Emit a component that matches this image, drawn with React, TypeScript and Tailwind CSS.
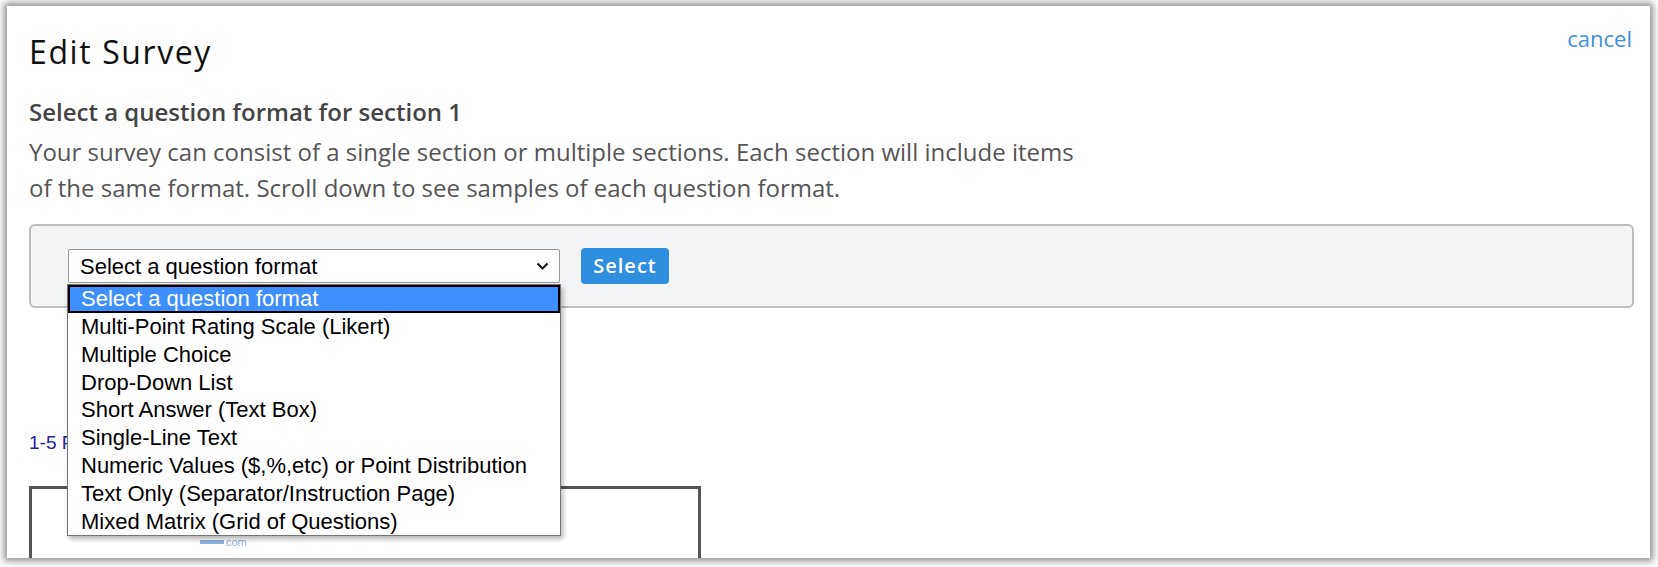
import React from "react";

const formats = [
  "Select a question format",
  "Multi-Point Rating Scale (Likert)",
  "Multiple Choice",
  "Drop-Down List",
  "Short Answer (Text Box)",
  "Single-Line Text",
  "Numeric Values ($,%,etc) or Point Distribution",
  "Text Only (Separator/Instruction Page)",
  "Mixed Matrix (Grid of Questions)",
];

function Chevron() {
  return (
    <svg width="13" height="8" viewBox="0 0 13 8" fill="none">
      <path d="M1.5 1.5 L6.5 6.5 L11.5 1.5" stroke="#111" strokeWidth="2" />
    </svg>
  );
}

export default function App() {
  return (
    <div className="w-[1658px] h-[567px] bg-white overflow-hidden pt-[6px] pl-[7px]">
      <div className="relative w-[1643px] h-[552px] bg-white overflow-hidden shadow-[0_0_7px_3px_rgba(0,0,0,0.45)] pt-[17px] pl-[22px] pr-[16px] font-['Open_Sans',sans-serif]">
        {/* Header */}
        <div className="flex justify-between items-start">
          <h1 className="mt-[9px] text-[32px] leading-[40px] text-[#111] tracking-[1.6px]">
            Edit Survey
          </h1>
          <a className="mr-[2px] text-[22px] leading-[30px] text-[#3d8fde]">
            cancel
          </a>
        </div>

        <h2 className="mt-[24px] text-[24px] leading-[32px] font-semibold text-[#444]">
          Select a question format for section 1
        </h2>
        <p className="mt-[6px] text-[24px] leading-[36px] text-[#555]">
          Your survey can consist of a single section or multiple sections. Each section will include items
          <br />
          of the same format. Scroll down to see samples of each question format.
        </p>

        {/* Format picker */}
        <div className="mt-[18px] h-[84px] bg-[#f3f4f6] border-2 border-[#bdbdbd] rounded-[6px] pt-[23px] pl-[37px] flex gap-[21px] items-start">
          <div className="relative">
            <div className="w-[492px] h-[34px] bg-white border border-[#999] rounded-[2px] flex items-center justify-between pl-[11px] pr-[10px] font-['Liberation_Sans',Arial,sans-serif] text-[22px] text-black">
              <span>Select a question format</span>
              <Chevron />
            </div>
            {/* Open dropdown list */}
            <div className="absolute left-[-1px] top-[35px] z-10 w-[494px] bg-white border border-[#767676] shadow-[2px_3px_5px_rgba(0,0,0,0.3)] font-['Liberation_Sans',Arial,sans-serif] text-[22px] text-black">
              {formats.map((f, i) => (
                <div
                  key={f}
                  className={
                    i === 0
                      ? "h-[28px] leading-[24px] pl-[11px] bg-[#3e8ffd] text-white border-2 border-black"
                      : "h-[27.8px] leading-[27.8px] pl-[13px]"
                  }
                >
                  {f}
                </div>
              ))}
            </div>
          </div>
          <button className="mt-[-1px] w-[88px] h-[36px] rounded-[4px] bg-[#2f8ede] text-white text-[20px] font-semibold tracking-[1px]">
            Select
          </button>
        </div>

        {/* Sample area behind the dropdown */}
        <a className="block mt-[124px] whitespace-nowrap font-['Liberation_Sans',Arial,sans-serif] text-[19px] leading-[22px] text-[#2323a3]">
          1-5 Point Rating Scale
        </a>
        <div className="mt-[32px] w-[672px] h-[120px] border-[3px] border-[#555] pt-[47px] pl-[168px]">
          <div className="flex items-center gap-[2px]">
            <div className="w-[24px] h-[4px] bg-[#8fb3dc]" />
            <span className="text-[11px] leading-[12px] text-[#8fb3dc] font-['Liberation_Sans',Arial,sans-serif]">
              com
            </span>
          </div>
        </div>
      </div>
    </div>
  );
}
